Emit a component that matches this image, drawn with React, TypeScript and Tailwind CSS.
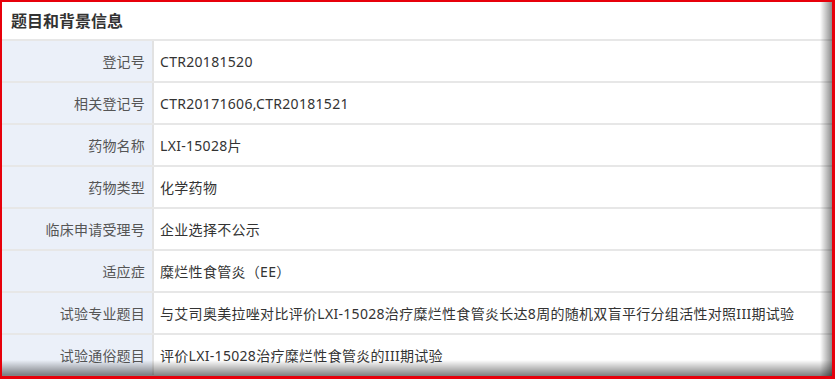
const rows: { label: string; value: string }[] = [
  { label: '登记号', value: 'CTR20181520' },
  { label: '相关登记号', value: 'CTR20171606,CTR20181521' },
  { label: '药物名称', value: 'LXI-15028片' },
  { label: '药物类型', value: '化学药物' },
  { label: '临床申请受理号', value: '企业选择不公示' },
  { label: '适应症', value: '糜烂性食管炎（EE）' },
  {
    label: '试验专业题目',
    value: '与艾司奥美拉唑对比评价LXI-15028治疗糜烂性食管炎长达8周的随机双盲平行分组活性对照III期试验',
  },
  { label: '试验通俗题目', value: '评价LXI-15028治疗糜烂性食管炎的III期试验' },
]

export default function App() {
  return (
    <div
      className="w-[835px] h-[379px] overflow-hidden border-red-600 border-t-2 border-l-2 border-r-[3px] border-b-[3px] bg-white"
      style={{ fontFamily: '"Noto Sans", "Noto Sans CJK SC", sans-serif' }}
    >
      <div className="relative h-full overflow-hidden">
        <div className="h-[37px] flex items-center pl-[9px] text-[16px] font-bold text-[#333]">
          题目和背景信息
        </div>
        {rows.map((row) => (
          <div key={row.label} className="flex h-[42px] border-t-2 border-[#e7e7e7]">
            <div className="w-[150px] shrink-0 bg-[#ebf0f9] flex items-center justify-end pr-[7px] text-[14px] tracking-[0.2px] text-[#555]">
              {row.label}
            </div>
            <div className="w-[2px] bg-[#e2e2e2]" />
            <div className="flex-1 flex items-center pl-[6px] text-[14px] tracking-[0.3px] text-[#333] whitespace-nowrap">
              {row.value}
            </div>
          </div>
        ))}
        {/* window drop shadow along right and bottom edges */}
        <div className="pointer-events-none absolute top-0 bottom-0 right-0 w-[12px] bg-linear-to-l from-[rgba(0,0,0,0.45)] to-transparent" />
        <div className="pointer-events-none absolute left-0 right-0 bottom-0 h-[16px] bg-linear-to-t from-[rgba(0,0,0,0.5)] to-transparent" />
      </div>
    </div>
  )
}
